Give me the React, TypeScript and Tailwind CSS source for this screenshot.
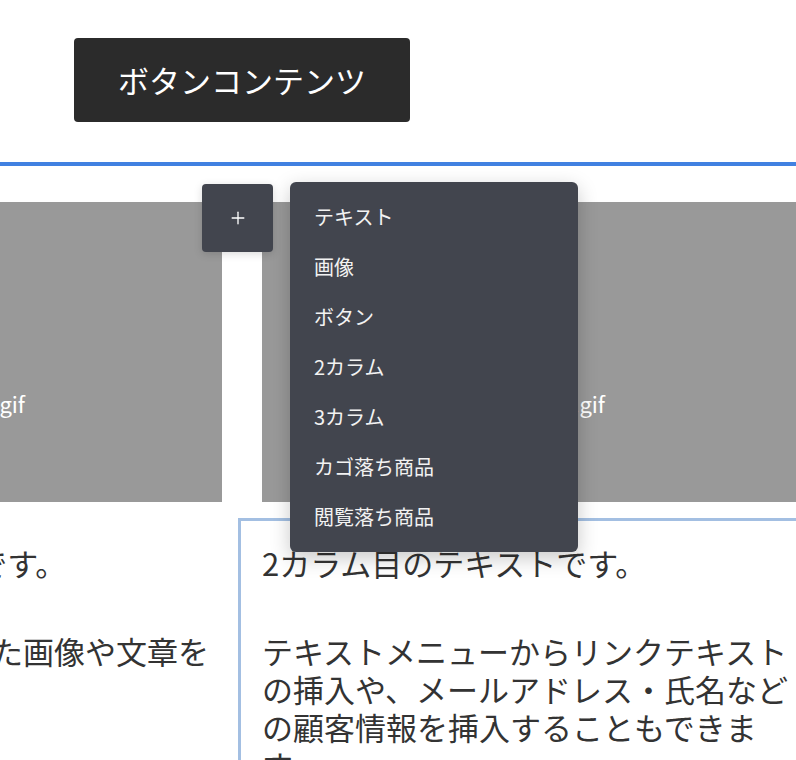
import { Plus } from "lucide-react";

const menuItems = ["テキスト", "画像", "ボタン", "2カラム", "3カラム", "カゴ落ち商品", "閲覧落ち商品"];

function ImageBlock() {
  // broken image placeholder, alt text sits right of centre
  return (
    <div className="h-[300px] bg-[#999999] flex justify-end items-start pt-[186px] pr-[197px]">
      <span className="text-white text-[22px] leading-[30px] whitespace-nowrap">placeholder.gif</span>
    </div>
  );
}

export default function App() {
  return (
    <div className="relative w-[796px] h-[760px] overflow-hidden bg-white font-['Noto_Sans_CJK_JP','Noto_Sans',sans-serif]">
      <div className="pt-[38px] pl-[74px]">
        <button className="h-[84px] w-[336px] rounded-[4px] bg-[#2b2b2b] text-white text-[31px] flex items-center justify-center">
          ボタンコンテンツ
        </button>
      </div>

      <div className="mt-[40px] h-[4px] bg-[#4181e1]" />

      {/* 2 column row, scrolled so the first column is mostly off screen */}
      <div className="mt-[36px] ml-[-318px] flex gap-[40px] text-[#333333] text-[31px] leading-[38px]">
        <div className="w-[540px] shrink-0">
          <ImageBlock />
          <div className="mt-[16px] pt-[26px]">
            <p>1カラム目のテキストです。</p>
            <p className="mt-[50px]">ここには自由に入力した画像や文章を配置できます。</p>
          </div>
        </div>
        <div className="w-[540px] shrink-0">
          <ImageBlock />
          <div className="mt-[16px] -ml-[24px] border-l-[3px] border-t-[3px] border-[#a3bfe2] pl-[21px] pt-[23px]">
            <p>2カラム目のテキストです。</p>
            <p className="mt-[50px]">
              テキストメニューからリンクテキストの挿入や、メールアドレス・氏名などの顧客情報を挿入することもできます。
            </p>
          </div>
        </div>
      </div>

      {/* add block button + menu */}
      <button className="absolute left-[202px] top-[184px] w-[71px] h-[68px] rounded-[4px] bg-[#42454e] text-white flex items-center justify-center shadow-[0_2px_8px_rgba(0,0,0,0.15)]">
        <Plus className="w-[20px] h-[20px]" strokeWidth={1.6} />
      </button>
      <div className="absolute left-[290px] top-[182px] w-[288px] py-[10px] rounded-[6px] bg-[#42454e] shadow-[0_6px_20px_rgba(0,0,0,0.22)]">
        {menuItems.map((item) => (
          <div key={item} className="px-[24px] h-[50px] flex items-center text-[20px] text-[#f2f2f2]">
            {item}
          </div>
        ))}
      </div>
    </div>
  );
}
